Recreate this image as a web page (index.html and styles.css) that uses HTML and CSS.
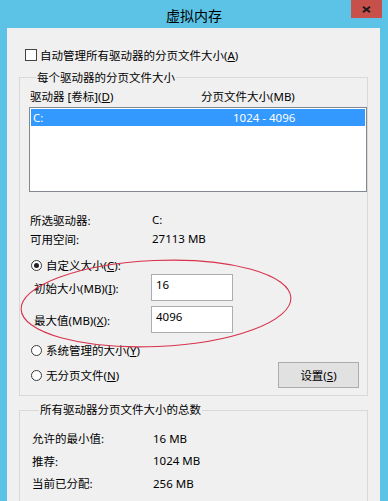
FILE: index.html
```html
<!DOCTYPE html>
<html lang="zh-CN">
<head>
<meta charset="utf-8">
<title>虚拟内存</title>
<link rel="stylesheet" href="styles.css">
</head>
<body>
<div class="window">
  <div class="titlebar">
    <div class="title">虚拟内存</div>
    <div class="close">
      <svg width="9" height="7" viewBox="0 0 9 7"><path d="M1 0.8 L8 6.2 M8 0.8 L1 6.2" stroke="#1b1b1b" stroke-width="2" fill="none"/></svg>
    </div>
  </div>
  <div class="client">
    <div class="check-row"><span class="checkbox"></span><span>自动管理所有驱动器的分页文件大小(<u>A</u>)</span></div>

    <fieldset class="group group-drives">
      <legend>每个驱动器的分页文件大小</legend>
      <div class="list-head"><span>驱动器 [卷标](<u>D</u>)</span><span>分页文件大小(MB)</span></div>
      <div class="listbox">
        <div class="list-row selected"><span>C:</span><span>1024 - 4096</span></div>
      </div>
      <div class="info-grid">
        <span>所选驱动器:</span><span>C:</span>
        <span>可用空间:</span><span>27113 MB</span>
      </div>
      <div class="radio-row first"><span class="radio checked"></span><span>自定义大小(<u>C</u>):</span></div>
      <div class="size-grid">
        <span>初始大小(MB)(<u>I</u>):</span><div class="textbox">16</div>
        <span>最大值(MB)(<u>X</u>):</span><div class="textbox">4096</div>
      </div>
      <div class="radio-row second"><span class="radio"></span><span>系统管理的大小(<u>Y</u>)</span></div>
      <div class="last-row">
        <div class="radio-row"><span class="radio"></span><span>无分页文件(<u>N</u>)</span></div>
        <div class="button">设置(<u>S</u>)</div>
      </div>
    </fieldset>

    <fieldset class="group group-total">
      <legend>所有驱动器分页文件大小的总数</legend>
      <div class="total-grid">
        <span>允许的最小值:</span><span>16 MB</span>
        <span>推荐:</span><span>1024 MB</span>
        <span>当前已分配:</span><span>256 MB</span>
      </div>
    </fieldset>
  </div>

  <svg class="annotation" width="388" height="501" viewBox="0 0 388 501">
    <ellipse cx="156" cy="303.5" rx="135" ry="43" transform="rotate(-2.5 156 303.5)" fill="none" stroke="#d7334c" stroke-width="1.1"/>
  </svg>
</div>
</body>
</html>
```

FILE: styles.css
```css
* { box-sizing: border-box; }
html, body { margin: 0; padding: 0; }
body {
  width: 388px;
  height: 501px;
  overflow: hidden;
  font-family: "Noto Sans", "Noto Sans CJK SC", sans-serif;
  font-size: 11.5px;
  color: #000;
}
u { text-decoration: underline; text-underline-offset: 1px; }

.window {
  position: relative;
  width: 388px;
  height: 501px;
  background: #5cc3e6;
  display: flex;
  flex-direction: column;
}

.titlebar {
  height: 28px;
  flex: none;
  display: grid;
  grid-template-columns: 1fr auto 1fr;
  align-items: start;
}
.title {
  grid-column: 2;
  font-size: 14px;
  line-height: 28px;
  padding-top: 1px;
  font-family: "Noto Sans CJK SC", sans-serif;
}
.close {
  grid-column: 3;
  justify-self: end;
  width: 31px;
  height: 18px;
  margin-right: 6px;
  background: #c7504b;
  display: flex;
  align-items: center;
  justify-content: center;
}
.close svg { display: block; }

.client {
  flex: 1;
  margin: 0 8px 0 7px;
  background: #f0f0f0;
  padding: 0 12px;
}

.check-row {
  margin-top: 18px;
  height: 17px;
  padding-left: 6px;
  display: flex;
  align-items: center;
  gap: 3px;
}
.checkbox {
  width: 12px;
  height: 12px;
  border: 1px solid #444;
  background: #fff;
  flex: none;
}

.group {
  border: 1px solid #d9d9d9;
  margin: 0;
  padding: 0;
  min-width: 0;
}
.group legend {
  margin-left: 7px;
  padding: 0 1px;
  line-height: 15px;
}
.group-drives {
  margin-top: 7px;
  padding: 0 0 7px 9px;
}

.list-head {
  margin-top: 4px;
  height: 16px;
  line-height: 16px;
  padding-left: 1px;
  display: grid;
  grid-template-columns: 171px 1fr;
}
.listbox {
  margin-top: 2px;
  height: 85px;
  border: 1px solid #828790;
  background: #fff;
  padding: 1px;
}
.list-row {
  height: 17px;
  line-height: 17px;
  padding-left: 2px;
  display: grid;
  grid-template-columns: 200px 1fr;
}
.list-row.selected {
  background: #3399ff;
  color: #fff;
}

.info-grid {
  margin-top: 18px;
  padding-left: 1px;
  display: grid;
  grid-template-columns: 122px 1fr;
  grid-auto-rows: 19px;
  align-items: center;
}

.radio-row {
  height: 18px;
  padding-left: 2px;
  display: flex;
  align-items: center;
  gap: 4px;
}
.radio-row.first { margin-top: 8px; }
.radio-row.second { margin-top: 8px; }
.radio {
  width: 11px;
  height: 11px;
  border: 1px solid #3a3a3a;
  border-radius: 50%;
  background: #fff;
  flex: none;
  display: flex;
  align-items: center;
  justify-content: center;
}
.radio.checked::after {
  content: "";
  width: 5px;
  height: 5px;
  border-radius: 50%;
  background: #222;
}

.size-grid {
  padding-left: 5px;
  display: grid;
  grid-template-columns: 117px 82px;
  grid-auto-rows: 27px;
  row-gap: 5px;
  align-items: center;
}
.textbox {
  height: 27px;
  border: 1px solid #abadb3;
  background: #fff;
  padding: 3px 0 0 4px;
  line-height: 14px;
}

.last-row {
  margin-top: 3px;
  height: 26px;
  padding-right: 8px;
  display: flex;
  align-items: center;
  justify-content: space-between;
}
.button {
  width: 81px;
  height: 26px;
  border: 1px solid #acacac;
  background: #e1e1e1;
  display: flex;
  align-items: center;
  justify-content: center;
}

.group-total {
  margin-top: 7px;
  padding: 10px 0 20px 12px;
}
.group-total legend { line-height: 14px; }
.total-grid {
  display: grid;
  grid-template-columns: 121px 1fr;
  grid-auto-rows: 22.5px;
  align-items: center;
}

.annotation {
  position: absolute;
  left: 0;
  top: 0;
  pointer-events: none;
}
```
